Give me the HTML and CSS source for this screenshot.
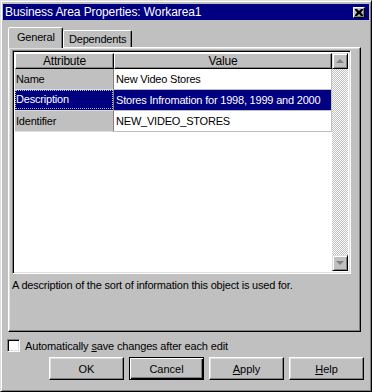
FILE: index.html
```html
<!DOCTYPE html>
<html lang="en">
<head>
  <meta charset="UTF-8" />
  <title>Business Area Properties: Workarea1</title>
  <link rel="stylesheet" href="styles.css">
</head>
<body>
  <div class="window">
    <div class="titlebar">
      <span class="title">Business Area Properties: Workarea1</span>
      <button class="close" aria-label="Close">
        <svg width="8" height="7" viewBox="0 0 8 7">
          <path d="M0 0h2l2 2 2-2h2v1l-2 2.5 2 2.5v1h-2l-2-2-2 2h-2v-1l2-2.5-2-2.5z" fill="#000"/>
        </svg>
      </button>
    </div>

    <div class="content">
      <div class="tabs">
        <div class="tab active">General</div>
        <div class="tab">Dependents</div>
      </div>

      <div class="panel">
        <div class="grid">
          <div class="table">
            <div class="row head">
              <div class="hcell attr">Attribute</div>
              <div class="hcell val">Value</div>
            </div>
            <div class="row">
              <div class="cell attr">Name</div>
              <div class="cell val">New Video Stores</div>
            </div>
            <div class="row selected">
              <div class="cell attr"><span class="focus">Description</span></div>
              <div class="cell val">Stores Infromation for 1998, 1999 and 2000</div>
            </div>
            <div class="row">
              <div class="cell attr">Identifier</div>
              <div class="cell val">NEW_VIDEO_STORES</div>
            </div>
            <div class="filler"></div>
          </div>
          <div class="scrollbar">
            <div class="sbtn"><span class="arrow up"></span></div>
            <div class="track"></div>
            <div class="sbtn"><span class="arrow down"></span></div>
          </div>
        </div>
        <p class="hint">A description of the sort of information this object is used for.</p>
      </div>

      <label class="check">
        <span class="box"></span>
        <span>Automatically <u>s</u>ave changes after each edit</span>
      </label>

      <div class="buttons">
        <button class="btn">OK</button>
        <button class="btn default">Cancel</button>
        <button class="btn"><u>A</u>pply</button>
        <button class="btn"><u>H</u>elp</button>
      </div>
    </div>
  </div>
</body>
</html>
```

FILE: styles.css
```css
body {
  margin: 0;
  background-color: #c0c0c0;
  font-family: "Liberation Sans", Arial, sans-serif;
  font-size: 11px;
  letter-spacing: -0.2px;
  color: #000;
}
.window {
  width: 372px;
  height: 392px;
  box-sizing: border-box;
  border: 1px solid;
  border-color: #dfdfdf #000 #000 #dfdfdf;
  box-shadow: inset 1px 1px #fff, inset -1px -1px #808080;
  padding: 3px 2px 2px 2px;
  background-color: #c0c0c0;
  display: flex;
  flex-direction: column;
}
.titlebar {
  height: 16px;
  background-color: #000080;
  color: #fff;
  display: flex;
  align-items: center;
  justify-content: space-between;
  padding: 0 4px 0 2px;
}
.title {
  font-size: 12px;
  letter-spacing: -0.1px;
}
.close {
  width: 12px;
  height: 11px;
  padding: 0;
  border: 1px solid;
  border-color: #fff #000 #000 #fff;
  box-shadow: inset -1px -1px #808080;
  background-color: #c0c0c0;
  display: flex;
  align-items: center;
  justify-content: center;
}
.content {
  flex: 1;
  padding: 7px 0 0 5px;
  display: flex;
  flex-direction: column;
}
.tabs {
  display: flex;
  align-items: flex-end;
  height: 20px;
  position: relative;
  z-index: 1;
}
.tab {
  height: 16px;
  line-height: 16px;
  padding: 0 5px;
  border: 1px solid;
  border-bottom: none;
  border-color: #fff #000 transparent #fff;
  box-shadow: inset -1px 0 #808080;
  border-radius: 2px 2px 0 0;
  background-color: #c0c0c0;
}
.tab.active {
  height: 20px;
  line-height: 18px;
  width: 40px;
  padding: 0 5px 0 8px;
  margin-bottom: -1px;
}
.panel {
  width: 353px;
  height: 285px;
  box-sizing: border-box;
  border: 1px solid;
  border-color: #fff #000 #000 #fff;
  box-shadow: inset -1px -1px #808080, inset 1px 1px #dfdfdf;
  padding: 2px 0 0 3px;
}
.grid {
  width: 339px;
  height: 224px;
  box-sizing: border-box;
  border: 1px solid;
  border-color: #808080 #fff #fff #808080;
  box-shadow: inset 1px 1px #000, inset -1px -1px #dfdfdf;
  padding: 2px 2px 2px 2px;
  display: flex;
  background-color: #fff;
}
.table {
  flex: 1;
  min-width: 0;
  display: flex;
  flex-direction: column;
}
.row {
  display: flex;
  height: 21px;
}
.row.head {
  height: 16px;
}
.hcell {
  box-sizing: border-box;
  background-color: #c0c0c0;
  border: 1px solid;
  border-color: #fff #000 #000 #fff;
  box-shadow: inset -1px -1px #808080;
  text-align: center;
  line-height: 14px;
  font-size: 12px;
}
.attr {
  width: 99px;
  flex: none;
}
.val {
  flex: 1;
  min-width: 0;
}
.cell {
  box-sizing: border-box;
  line-height: 20px;
  white-space: nowrap;
  overflow: hidden;
  border-bottom: 1px solid #c0c0c0;
}
.cell.attr {
  background-color: #c0c0c0;
  border-bottom-color: #dfdfdf;
  border-right: 1px solid #808080;
  padding-left: 1px;
}
.cell.val {
  background-color: #fff;
  border-right: 1px solid #c0c0c0;
  padding-left: 2px;
}
.row.selected .cell {
  background-color: #000080;
  color: #fff;
}
.focus {
  display: block;
  height: 17px;
  line-height: 17px;
  margin: 1px 1px 0 0;
  outline: 1px dotted #c0c0c0;
}
.filler {
  flex: 1;
  background-color: #fff;
}
.scrollbar {
  width: 16px;
  flex: none;
  display: flex;
  flex-direction: column;
}
.sbtn {
  height: 16px;
  box-sizing: border-box;
  border: 1px solid;
  border-color: #dfdfdf #000 #000 #dfdfdf;
  box-shadow: inset 1px 1px #fff, inset -1px -1px #808080;
  background-color: #c0c0c0;
  display: flex;
  align-items: center;
  justify-content: center;
}
.track {
  flex: 1;
  background-image: conic-gradient(#fff 25%, #c0c0c0 0 50%, #fff 0 75%, #c0c0c0 0);
  background-size: 2px 2px;
}
.arrow {
  width: 0;
  height: 0;
  border-left: 4px solid transparent;
  border-right: 4px solid transparent;
}
.arrow.up {
  border-bottom: 4px solid #808080;
}
.arrow.down {
  border-top: 4px solid #808080;
}
.hint {
  margin: 5px 0 0 0;
}
.check {
  display: flex;
  align-items: center;
  gap: 5px;
  margin: 7px 0 0 -1px;
  height: 13px;
  letter-spacing: -0.15px;
}
.box {
  width: 13px;
  height: 13px;
  box-sizing: border-box;
  border: 1px solid;
  border-color: #808080 #fff #fff #808080;
  box-shadow: inset 1px 1px #000, inset -1px -1px #dfdfdf;
  background-color: #fff;
}
.buttons {
  display: flex;
  justify-content: flex-end;
  gap: 5px;
  margin: 5px 5px 0 0;
}
.btn {
  width: 75px;
  height: 23px;
  padding: 0;
  font-family: "Liberation Sans", Arial, sans-serif;
  font-size: 11px;
  color: #000;
  background-color: #c0c0c0;
  border: 1px solid;
  border-color: #fff #000 #000 #fff;
  box-shadow: inset -1px -1px #808080, inset 1px 1px #dfdfdf;
}
.btn.default {
  border: 1px solid #000;
  box-shadow: inset 1px 1px #fff, inset -1px -1px #000, inset -2px -2px #808080;
}
```
